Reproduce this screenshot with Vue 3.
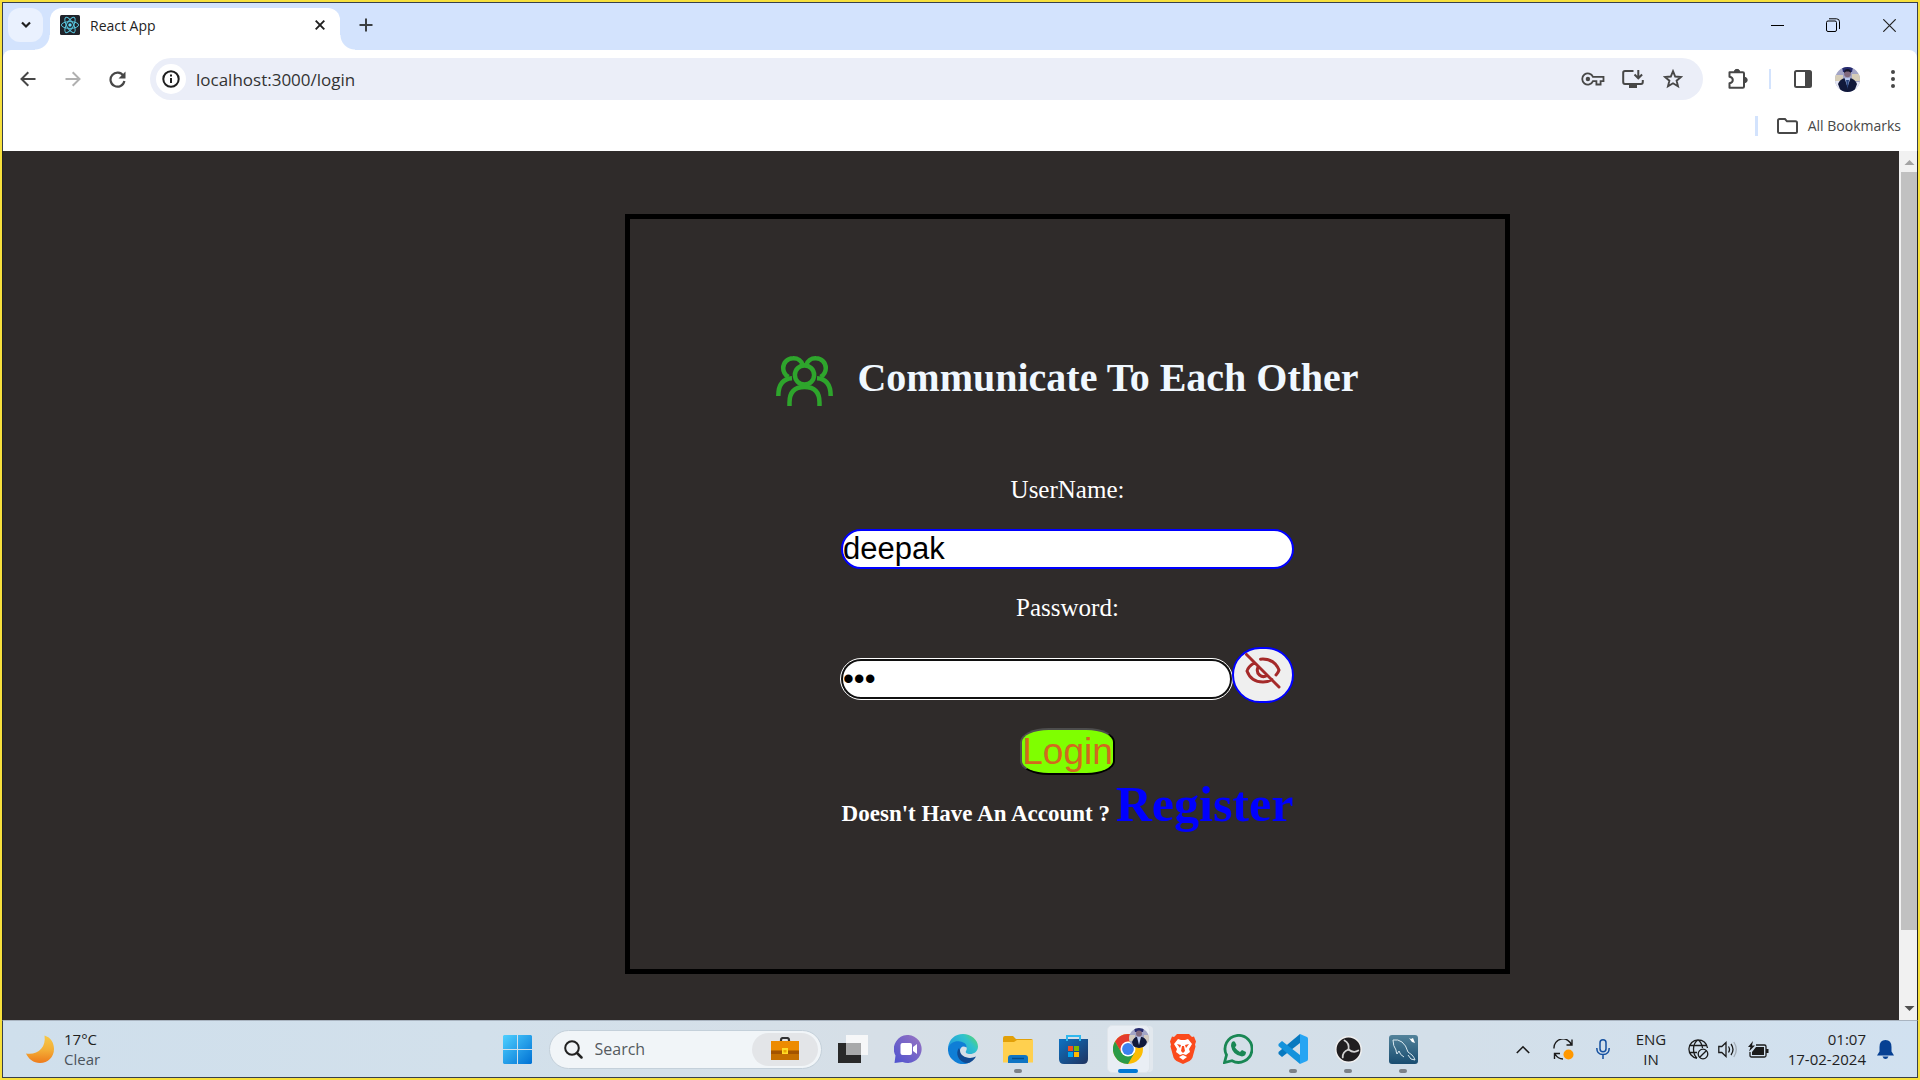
<script setup>
import { ref } from 'vue'

const username = ref('deepak')
const password = ref('abc')
const address = ref('localhost:3000/login')
</script>

<template>
  <div class="screen">
    <header class="tabstrip">
      <button class="tab-search" aria-label="Search tabs">
        <svg width="12" height="8" viewBox="0 0 12 8"><path d="M2 1.5 6 5.5 10 1.5" fill="none" stroke="#1f1f1f" stroke-width="2.2" /></svg>
      </button>
      <div class="tab">
        <svg width="20" height="20" viewBox="0 0 20 20">
          <rect width="20" height="20" rx="1.5" fill="#20232a" />
          <g fill="none" stroke="#58c4dc" stroke-width="1">
            <ellipse cx="10" cy="10" rx="8.6" ry="3.4" />
            <ellipse cx="10" cy="10" rx="8.6" ry="3.4" transform="rotate(60 10 10)" />
            <ellipse cx="10" cy="10" rx="8.6" ry="3.4" transform="rotate(120 10 10)" />
          </g>
          <circle cx="10" cy="10" r="1.7" fill="#61dafb" />
        </svg>
        <span class="tab-title">React App</span>
        <button class="tab-close" aria-label="Close tab">
          <svg width="10" height="10" viewBox="0 0 10 10"><path d="M.7.7 9.3 9.3M9.3.7.7 9.3" stroke="#1f1f1f" stroke-width="1.9" /></svg>
        </button>
      </div>
      <button class="new-tab" aria-label="New tab">
        <svg width="14" height="14" viewBox="0 0 14 14"><path d="M7 .5v13M.5 7h13" stroke="#3c4043" stroke-width="2" /></svg>
      </button>
      <div class="window-controls">
        <button aria-label="Minimize"><svg width="13" height="13" viewBox="0 0 13 13"><path d="M0 6.5h13" stroke="#000" /></svg></button>
        <button aria-label="Restore">
          <svg width="14" height="14" viewBox="0 0 14 14" fill="none" stroke="#000"><rect x=".5" y="3" width="10" height="10.5" rx="1.5" /><path d="M3 .8h7.5q3 0 3 3V11" /></svg>
        </button>
        <button aria-label="Close"><svg width="13" height="13" viewBox="0 0 13 13"><path d="M.3.3l12.4 12.4M12.7.3.3 12.7" stroke="#222" stroke-width="1.2" /></svg></button>
      </div>
    </header>

    <div class="chrome">
      <nav class="toolbar">
        <button class="tool" aria-label="Back">
          <svg width="16" height="16" viewBox="0 0 16 16" fill="none" stroke="#474747" stroke-width="2"><path d="M15.5 8H2M8.3 1.2 1.5 8l6.8 6.8" /></svg>
        </button>
        <button class="tool" aria-label="Forward">
          <svg width="16" height="16" viewBox="0 0 16 16" fill="none" stroke="#b0b0b0" stroke-width="2"><path d="M.5 8H14M7.7 1.2 14.5 8l-6.8 6.8" /></svg>
        </button>
        <button class="tool" aria-label="Reload">
          <svg width="17" height="17" viewBox="0 0 17 17"><path d="M14.4 4.8A7 7 0 1 0 15.4 10" fill="none" stroke="#474747" stroke-width="2.2" /><path d="M16.5.5v7h-7z" fill="#474747" /></svg>
        </button>
        <div class="omnibox">
          <button class="site-info" aria-label="Site information">
            <svg width="18" height="18" viewBox="0 0 18 18"><circle cx="9" cy="9" r="7.7" fill="none" stroke="#1f1f1f" stroke-width="2" /><path d="M9 8v5M9 4.6v2" stroke="#1f1f1f" stroke-width="2" /></svg>
          </button>
          <input v-model="address" class="address" aria-label="Address" />
          <button class="omni-icon" aria-label="Passwords">
            <svg width="24" height="14" viewBox="0 0 24 14" fill="none" stroke="#474747" stroke-width="1.8"><path d="M12 4.8A5.6 5.6 0 1 0 12 9.2h3.4v3.3h4.2V9.2h2.9V4.8z" /><circle cx="6.9" cy="7" r="2.2" fill="#474747" stroke="none" /></svg>
          </button>
          <button class="omni-icon" aria-label="Install app">
            <svg width="22" height="20" viewBox="0 0 22 20"><path d="M11.5 2H3Q1.2 2 1.2 3.800V13q0 2 1.800 2h16q1.800 0 1.800-2v-2" fill="none" stroke="#474747" stroke-width="2" /><path d="M7 15h8v4H7z" fill="#474747" /><path d="M16.300 1v8M12.500 5.500l3.800 3.800 3.800-3.800" fill="none" stroke="#474747" stroke-width="2" /></svg>
          </button>
          <button class="omni-icon" aria-label="Bookmark this page">
            <svg width="20" height="20" viewBox="0 0 20 20"><path d="M10 2.200 12.200 7.500 18 8 13.600 11.700 15 17.300 10 14.300 5 17.300 6.400 11.700 2 8 7.800 7.500z" fill="none" stroke="#474747" stroke-width="1.900" /></svg>
          </button>
        </div>
        <button class="tool" aria-label="Extensions">
          <svg width="22" height="22" viewBox="0 0 22 22"><path d="M2.500 4.200h13.300q1.200 0 1.200 1.200v13.200q0 1.200-1.200 1.200H2.500v-4.600q3.300-.6 3.300-3.200T2.500 8.800z" fill="none" stroke="#474747" stroke-width="2" stroke-linejoin="round" /><path d="M7.300 4a2.700 2.700 0 0 1 5.400 0M17.500 9.300a2.700 2.700 0 0 1 0 5.400" fill="#474747" stroke="#474747" /></svg>
        </button>
        <i class="divider"></i>
        <button class="tool" aria-label="Side panel">
          <svg width="18" height="18" viewBox="0 0 18 18"><rect x="1" y="1" width="16" height="16" rx="1.500" fill="none" stroke="#474747" stroke-width="2" /><path d="M11 1h6v16h-6z" fill="#474747" /></svg>
        </button>
        <button class="tool" aria-label="Profile">
          <svg width="25" height="25" viewBox="0 0 25 25">
            <clipPath id="profile-clip"><circle cx="12.500" cy="12.500" r="12.500" /></clipPath>
            <g clip-path="url(#profile-clip)">
              <path fill="#a3a5c6" d="M0 0h25v25H0z" /><path fill="#d6cdb8" d="M0 8h8v6H0zM17 7h8v7h-8z" /><path fill="#e6e8f6" d="M0 14h6v11H0zM20 15h5v10h-5z" />
              <path fill="#252a6e" d="M7 0h11l-1 5H8z" /><circle cx="12.500" cy="6.800" r="3.400" fill="#80697c" /><path d="M9 6q0-4 3.600-4T16 6l-2-1.500h-3z" fill="#15162b" />
              <path d="M3 17q2-5 7-6h5q5 1 7 6l-3 8H6z" fill="#10183a" /><path d="m9.500 11 3 9 3-9z" fill="#b6c7ef" /><path d="m11 13 1.500 9 1.500-9z" fill="#28447d" />
            </g>
          </svg>
        </button>
        <button class="tool" aria-label="Menu">
          <svg width="4" height="18" viewBox="0 0 4 18" fill="#474747"><circle cx="2" cy="2" r="2" /><circle cx="2" cy="9" r="2" /><circle cx="2" cy="16" r="2" /></svg>
        </button>
      </nav>
      <div class="bookmarks">
        <i class="divider wide"></i>
        <button class="all-bookmarks">
          <svg width="21" height="16" viewBox="0 0 21 16"><path d="M1 2.500Q1 1 2.500 1H8l2 2.300h8.500q1.500 0 1.500 1.500v8.700q0 1.500-1.500 1.500h-16Q1 15 1 13.500z" fill="none" stroke="#474747" stroke-width="2" /></svg>
          All Bookmarks
        </button>
      </div>
    </div>

    <div class="viewport">
      <main class="page">
        <section class="card">
          <div class="brand">
            <svg width="57" height="52" viewBox="0 0 57 52" fill="none" stroke="#2ea52c" stroke-width="4.500">
              <path d="M27 11.500A9.800 9.800 0 0 0 17 4.200 9.800 9.800 0 0 0 7.200 14q0 6 5.300 9M30 11.500A9.800 9.800 0 0 1 40 4.200 9.800 9.800 0 0 1 49.800 14q0 6-5.300 9" />
              <circle cx="28.500" cy="21" r="9.600" />
              <path d="M2.300 42Q2.300 25 16 24.300M54.700 42Q54.700 25 41 24.300M13.500 52V48.500Q13.500 33 28.500 33T43.500 48.500V52" />
            </svg>
            <h1>Communicate To Each Other</h1>
          </div>
          <form class="login" @submit.prevent>
            <label for="username">UserName:</label>
            <input id="username" v-model="username" class="field" type="text" />
            <label for="password">Password:</label>
            <div class="password-row">
              <input id="password" v-model="password" class="field active" type="password" />
              <button class="reveal" type="button" aria-label="Show password">
                <svg width="36" height="36" viewBox="0 0 36 36" fill="none" stroke="#a52a2a" stroke-width="3" stroke-linecap="round">
                  <path d="M1.500 1.500 34 34M9 10Q3 14 2 18q4 11 16 11 5 0 9-2.500M15.500 6.200Q29 5 34 17q-.7 2.500-3 5M13 14q-2 5 1.500 8t7.500.5" />
                </svg>
              </button>
            </div>
            <button class="submit" type="submit">Login</button>
          </form>
          <h3 class="signup">Doesn't Have An Account ? <a href="#register">Register</a></h3>
        </section>
      </main>
      <div class="scrollbar">
        <svg width="18" height="21" viewBox="0 0 18 21"><path d="m5.500 14 5-5 5 5z" fill="#a3a3a3" /></svg>
        <i class="thumb"></i>
        <i class="track"></i>
        <svg width="18" height="22" viewBox="0 0 18 22"><path d="m5.500 8 5 5 5-5z" fill="#505050" /></svg>
      </div>
    </div>

    <footer class="taskbar">
      <div class="weather">
        <svg width="28" height="28" viewBox="0 0 28 28">
          <defs><linearGradient id="moon" x2="0" y2="1"><stop stop-color="#f7c948" /><stop offset=".55" stop-color="#f3ac35" /><stop offset="1" stop-color="#ee7b1c" /></linearGradient></defs>
          <path d="M18.500.5C25 2.500 28 8 28 14c0 8-6 14-14 14C7.500 28 2.500 24 0 18.500 11 20.500 20.500 13 18.500.5z" fill="url(#moon)" />
        </svg>
        <p>17°C<br /><span>Clear</span></p>
      </div>

      <div class="dock">
        <button class="app" aria-label="Start">
          <svg width="29" height="29" viewBox="0 0 29 29">
            <defs><linearGradient id="start" x2="1" y2="1"><stop stop-color="#4fd0ff" /><stop offset="1" stop-color="#0071d4" /></linearGradient></defs>
            <path d="M1 0h13v14H0V1zM15 0h13l1 1v13H15zM0 15h14v14H1l-1-1zM15 15h14v13l-1 1H15z" fill="url(#start)" />
          </svg>
        </button>
        <div class="search">
          <svg width="19" height="19" viewBox="0 0 19 19" fill="none" stroke="#222" stroke-width="2"><circle cx="8" cy="8" r="6.800" /><path d="m13 13 4.500 4.500" stroke-width="2.500" stroke-linecap="round" /></svg>
          <input type="search" placeholder="Search" aria-label="Search" />
          <span class="case">
            <svg width="28" height="24" viewBox="0 0 28 24"><path d="M10 5V3q0-2 2-2h4q2 0 2 2v2" fill="none" stroke="#333" stroke-width="2.200" /><path d="M0 4h28v9H0z" fill="#ed8b00" /><path d="M0 13h28v10H0z" fill="#c46f00" /><path d="M0 14h28v3H0z" fill="#a35400" /><path d="M11 11h6v6h-6z" fill="#ffdc28" /><path d="M12.500 13h3v2.500h-3z" fill="#e9a900" /></svg>
          </span>
        </div>
        <button class="app" aria-label="Task view">
          <svg width="30" height="28" viewBox="0 0 30 28"><path d="M0 8h23v20H0z" fill="#292929" /><path d="M8 0h22v20H8z" fill="#fbfbfb" fill-opacity=".88" /><path d="M8 8h15v12H8z" fill="#a8a9aa" /></svg>
        </button>
        <button class="app" aria-label="Chat">
          <svg width="29" height="29" viewBox="0 0 29 29">
            <defs><linearGradient id="chat" x1="1" x2="0" y2="1"><stop stop-color="#9a75c2" /><stop offset="1" stop-color="#4d52cf" /></linearGradient></defs>
            <path d="M14.500 0a14 14 0 1 1-6 27L.5 28l1-7.500A14 14 0 0 1 14.500 0z" fill="url(#chat)" /><rect x="6.500" y="8" width="11.500" height="12" rx="2" fill="#fff" /><path d="m19 12 4-3v10l-4-3z" fill="#fff" />
          </svg>
        </button>
        <button class="app" aria-label="Edge">
          <svg width="30" height="30" viewBox="0 0 30 30">
            <defs><linearGradient id="edge" y1=".6"><stop stop-color="#219be0" /><stop offset=".6" stop-color="#30c2cc" /><stop offset="1" stop-color="#63dc55" /></linearGradient></defs>
            <path d="M0 14C1 5 7 0 15 0s15 6 15 12.500c0 5-4 7.500-8 7.500-3 0-5-1-4-3 2-3 0-6-4-7-6-1-11 0-14 4z" fill="url(#edge)" />
            <path d="M0 14C2 9 7 6.500 12 7.500c4 .5 7 3 6.500 6-5-3-8 2-6 7 2 4 6 7 10 7.500A15 15 0 0 1 0 14z" fill="#0f7ed6" />
            <path d="M11 14c-4 5-1 14 8 15.300 4-.8 7-3.300 9-6.800-7 3.500-16 0-16-6z" fill="#114a91" />
          </svg>
        </button>
        <button class="app running" aria-label="File Explorer">
          <svg width="30" height="27" viewBox="0 0 30 27"><path d="M0 2q0-2 2-2h8l3 3h15q2 0 2 2v6H0z" fill="#e2a008" /><path d="M0 6h11l3-2h16v22.500H0z" fill="#ffd04f" /><path d="M5 27v-5q0-3 3-3h14q3 0 3 3v5z" fill="#0f75c4" /><path d="M9 22.500h12" stroke="#054d8c" stroke-width="1.500" /></svg>
        </button>
        <button class="app" aria-label="Microsoft Store">
          <svg width="29" height="29" viewBox="0 0 29 29">
            <defs><linearGradient id="store" x2="1" y2="1"><stop stop-color="#0d72c3" /><stop offset="1" stop-color="#20335f" /></linearGradient></defs>
            <path d="M0 4h29v20q0 5-5 5H5q-5 0-5-5z" fill="url(#store)" /><path d="M8 6V1h13v5" fill="none" stroke="#30b8ee" stroke-width="2" /><path d="M9 11h5v5H9z" fill="#f25022" /><path d="M15 11h5v5h-5z" fill="#7fba00" /><path d="M9 17h5v5H9z" fill="#00a4ef" /><path d="M15 17h5v5h-5z" fill="#ffb900" />
          </svg>
        </button>
        <button class="app current" aria-label="Chrome">
          <svg class="chrome-logo" width="36" height="36" viewBox="0 0 36 36">
            <circle cx="15" cy="21" r="15" fill="#fbbc04" />
            <path d="M2 13.500A15 15 0 0 1 28 13.500H15L8.500 24.700z" fill="#e33b2e" />
            <path d="M2 13.500A15 15 0 0 0 15 36l6.500-11.300L8.500 24.700z" fill="#2a9b48" />
            <circle cx="15" cy="21" r="7.500" fill="#fff" /><circle cx="15" cy="21" r="5.900" fill="#3b82ee" />
            <clipPath id="badge-clip"><circle cx="26" cy="10" r="10" /></clipPath>
            <g clip-path="url(#badge-clip)"><path fill="#a3a5c6" d="M16 0h20v20H16z" /><path fill="#d3cbc0" d="M16 7h6v6h-6zM31 7h5v8h-5z" /><path fill="#252a6e" d="M21 0h10l-1 4h-8z" /><circle cx="26" cy="5.500" r="3" fill="#80697c" /><path d="M19 14q2-5 5-5h4q4 0 6 5l-3 6H21z" fill="#10183a" /><path d="m24 9 2 8 2-8z" fill="#b6c7ef" /></g>
          </svg>
        </button>
        <button class="app" aria-label="Brave">
          <svg width="26" height="30" viewBox="0 0 26 30"><path d="m7 0h12l3 3 2-.5 2 5-1 3 .5 2-3 11q-1 2-3 3.500L13 30l-6.500-3Q4.500 25.500 3.500 23.500L.5 12.500l.5-2-1-3 2-5 2 .5z" fill="#fb4a1c" /><path d="m8 5 3 1h4l3-1 4 5-3 5 1 3-4 3-3-1-3 1-4-3 1-3-3-5z" fill="#fff" /><path d="m7 10 4 1-1 3zM19 10l-4 1 1 3zM12 12h2l1 5-2 2-2-2z" fill="#fb4a1c" /><path d="m9 23 4-2 4 2-4 3z" fill="#fff" /></svg>
        </button>
        <button class="app" aria-label="WhatsApp">
          <svg width="30" height="30" viewBox="0 0 30 30"><path d="m1.500 28.500 2-7.500A13.500 13.500 0 1 1 9 26.700z" fill="none" stroke="#198754" stroke-width="2.800" /><path d="M9 8q2-1.500 3 0l1.500 3-1.500 2.500q2 3 5 4.500l2-2 4 2q0 4-4 4.500Q9.500 21 8 12 8 9.500 9 8z" fill="#198754" /></svg>
        </button>
        <button class="app running" aria-label="Visual Studio Code">
          <svg width="30" height="30" viewBox="0 0 30 30"><path d="M22 0v9L4 23l-3.500-3v-2z" fill="#0879bf" /><path d="M22 30v-9L4 7 .5 10v2z" fill="#1593dc" /><path d="m22 0 7 3q1 .5 1 2v20q0 1.500-1 2l-7 3z" fill="#27a5f3" /></svg>
        </button>
        <button class="app running" aria-label="OBS Studio">
          <svg width="27" height="27" viewBox="0 0 27 27"><circle cx="13.500" cy="13.500" r="12.700" fill="#201e20" stroke="#f1f1f1" stroke-width="1.500" /><g fill="none" stroke="#d2d2d2" stroke-width="1.800" stroke-linecap="round"><path d="M13.500 13.500Q14.500 7 9.500 4.500" /><path d="M13.500 13.500Q14.500 7 9.500 4.500" transform="rotate(120 13.500 13.500)" /><path d="M13.500 13.500Q14.500 7 9.500 4.500" transform="rotate(240 13.500 13.500)" /></g></svg>
        </button>
        <button class="app running" aria-label="MySQL Workbench">
          <svg width="29" height="29" viewBox="0 0 29 29">
            <defs><linearGradient id="sql" x2="0" y2="1"><stop stop-color="#53839b" /><stop offset="1" stop-color="#194d70" /></linearGradient></defs>
            <rect width="29" height="29" rx="3" fill="url(#sql)" /><path d="M4 5q5-1 9 2t6 10l4 3q2 2 3 5l-4-1-3-4M8 19q-1-2-1-4-3-4-3-10M8 19l2-3q1 4 5 6" fill="none" stroke="#d9e8ef" stroke-width="1" /><path d="m20 3 2 1 2-1 2 5-3-1z" fill="#fff" />
          </svg>
        </button>
      </div>

      <div class="tray">
        <button class="tray-icon" aria-label="Hidden icons"><svg width="14" height="9" viewBox="0 0 14 9"><path d="m.8 8 6.200-6.200L13.200 8" fill="none" stroke="#1b1b1b" stroke-width="1.600" /></svg></button>
        <button class="tray-icon" aria-label="Updates">
          <svg width="21" height="21" viewBox="0 0 21 21"><path d="M1 9.500A9 9 0 0 1 18.500 6M19 .5V6h-5.500M10 20q-5 0-8-5M1.500 20v-5.500H7" fill="none" stroke="#1b1b1b" stroke-width="1.400" /><circle cx="15.500" cy="15.500" r="5" fill="#ff9800" /></svg>
        </button>
        <button class="tray-icon" aria-label="Microphone">
          <svg width="14" height="20" viewBox="0 0 14 20" fill="none" stroke="#1450a0" stroke-width="1.500"><rect x="4" y=".8" width="6" height="12" rx="3" /><path d="M.8 9q0 6.500 6.200 6.500T13.200 9M7 15.500V20" /></svg>
        </button>
        <p class="lang">ENG<br />IN</p>
        <button class="tray-icon small" aria-label="Network">
          <svg width="21" height="21" viewBox="0 0 21 21" fill="none" stroke="#1b1b1b" stroke-width="1.300"><path d="M19.500 9A9.300 9.300 0 1 0 9 19.300M1.500 6.500h17M1.500 13.500H9M9 19Q5.500 16 5.500 10T10 .8Q14 4 14.500 9" /><circle cx="15" cy="15" r="4.800" /><path d="m11.700 18.300 6.600-6.600" /></svg>
        </button>
        <button class="tray-icon small" aria-label="Volume">
          <svg width="20" height="17" viewBox="0 0 20 17" fill="none" stroke="#1b1b1b" stroke-width="1.300"><path d="M.8 5.500h3L8 1.500v14l-4.200-4h-3zM10.500 5.500q2 3 0 6M13 3q4 5.500 0 11" /><path d="M15.800 1q5 7.500 0 15" stroke="#a4adb6" /></svg>
        </button>
        <button class="tray-icon small" aria-label="Battery">
          <svg width="21" height="17" viewBox="0 0 21 17"><path d="M8 4h8.500q1.500 0 1.500 1.500v9q0 1.500-1.500 1.500h-13Q2 16 2 14.500V11" fill="none" stroke="#1b1b1b" stroke-width="1.300" /><path d="M8 6h8v8H4v-3zM18 8h2.500v4H18zM5 0 0 6h2.500L1 10.500 7 4.500H4z" fill="#1b1b1b" /></svg>
        </button>
        <p class="clock">01:07<br />17-02-2024</p>
        <button class="bell" aria-label="Notifications">
          <svg width="17" height="19" viewBox="0 0 17 19" fill="#064093"><path d="M8.500 0Q14.500 0 14.500 7v4.500l2.500 4H0l2.500-4V7Q2.500 0 8.500 0zM5.500 16.500h6q-1 2.500-3 2.500t-3-2.500z" /></svg>
        </button>
      </div>
    </footer>
  </div>
</template>

<style>
body {
  margin: 0;
}
</style>

<style scoped>
.screen {
  box-sizing: border-box;
  min-height: 100vh;
  display: flex;
  flex-direction: column;
  border: 2px solid #f7e03c;
  font-family: "Open Sans", "Noto Sans", sans-serif;
  font-size: 14px;
  color: #1f1f1f;
}
.screen * {
  box-sizing: border-box;
}
.screen svg {
  display: block;
  flex: none;
}
button {
  padding: 0;
  border: 0;
  background: none;
  font: inherit;
  color: inherit;
}
input {
  padding: 0;
  border: 0;
  min-width: 0;
  font: inherit;
  color: inherit;
}
p,
h1,
h3 {
  margin: 0;
}

/* Tab strip */
.tabstrip {
  display: flex;
  align-items: flex-start;
  height: 48px;
  padding: 5px 0 0 5px;
  border: 1px solid #38404a;
  border-bottom: 0;
  background: #d3e3fd;
}
.tab-search {
  display: grid;
  place-items: center;
  width: 35px;
  height: 34px;
  border-radius: 12px;
  background: #eaf1fe;
}
.tab {
  position: relative;
  display: flex;
  align-items: center;
  width: 290px;
  height: 42px;
  margin-left: 7px;
  padding: 0 10px 8px;
  border-radius: 12px 12px 0 0;
  background: #fff;
}
.tab::before,
.tab::after {
  content: "";
  position: absolute;
  bottom: 0;
  width: 15px;
  height: 15px;
}
.tab::before {
  right: 100%;
  background: radial-gradient(circle at 0 0, transparent 14px, #fff 15px);
}
.tab::after {
  left: 100%;
  background: radial-gradient(circle at 100% 0, transparent 14px, #fff 15px);
}
.tab-title {
  flex: 1;
  margin-left: 10px;
}
.tab-close {
  display: grid;
  place-items: center;
  width: 20px;
  height: 20px;
}
.new-tab {
  display: grid;
  place-items: center;
  width: 34px;
  height: 34px;
  margin-left: 9px;
}
.window-controls {
  display: flex;
  margin-left: auto;
}
.window-controls button {
  display: grid;
  place-items: center;
  width: 56px;
  height: 34px;
}

/* Toolbar */
.chrome {
  border: 1px solid #38404a;
  border-width: 0 1px;
  background: linear-gradient(#d3e3fd 12px, #fff 12px);
}
.toolbar {
  display: flex;
  align-items: center;
  padding: 8px 2px 0;
  border-radius: 8px 8px 0 0;
  background: #fff;
}
.tool {
  display: grid;
  place-items: center;
  flex: none;
  width: 45px;
  height: 42px;
}
.omnibox {
  flex: 1;
  display: flex;
  align-items: center;
  height: 42px;
  margin: 0 12px 0 10px;
  padding: 0 10px 0 6px;
  border-radius: 21px;
  background: #ebeef8;
}
.site-info {
  display: grid;
  place-items: center;
  width: 30px;
  height: 30px;
  border-radius: 50%;
  background: #fff;
}
.address {
  flex: 1;
  margin-left: 10px;
  background: none;
  outline: 0;
  font-size: 17px;
  color: #333;
}
.omni-icon {
  display: grid;
  place-items: center;
  width: 40px;
  height: 40px;
}
.divider {
  flex: none;
  width: 2px;
  height: 20px;
  margin: 0 9px;
  background: #d3e3fd;
}
.divider.wide {
  width: 3px;
  margin: 0 19px 0 0;
}
.bookmarks {
  display: flex;
  align-items: center;
  justify-content: flex-end;
  height: 51px;
  padding-right: 16px;
  background: #fff;
}
.all-bookmarks {
  display: flex;
  align-items: center;
  gap: 10px;
  color: #474747;
}

/* Page */
.viewport {
  flex: 1;
  display: flex;
  border: 1px solid #222;
  border-width: 0 1px;
}
.page {
  flex: 1;
  display: grid;
  grid-template-columns: 622fr 885fr 389fr;
  align-items: start;
  padding: 63px 0 46px;
  background: #2f2b2a;
  font-family: "Liberation Serif", "Times New Roman", serif;
}
.card {
  grid-column: 2;
  display: flex;
  flex-direction: column;
  align-items: center;
  padding: 135px 0 137px;
  border: 5px solid #000;
  color: #fff;
}
.brand {
  display: flex;
  gap: 24px;
  height: 52px;
}
.brand h1 {
  font-size: 40px;
  line-height: 48px;
  color: #f0f8ff;
  white-space: nowrap;
}
.login {
  display: flex;
  flex-direction: column;
  align-items: center;
  gap: 25px;
  width: 453px;
  margin-top: 70px;
}
.login label {
  font-size: 25px;
  line-height: 28px;
}
.field {
  width: 100%;
  height: 40px;
  border: 2px solid #00f;
  border-radius: 20px;
  background: #fff;
  font-family: "Liberation Sans", Arial, sans-serif;
  font-size: 31px;
  color: #000;
}
.password-row {
  display: flex;
  align-items: flex-end;
  width: 100%;
}
.field.active {
  flex: 1;
  margin-bottom: 4px;
  border-color: #101010;
  outline: 1px solid #fff;
}
.reveal {
  display: flex;
  justify-content: center;
  align-items: flex-start;
  width: 62px;
  height: 56px;
  padding-top: 4px;
  border: 2px solid #00f;
  border-radius: 28px;
  background: #efefef;
}
.submit {
  width: 95px;
  height: 47px;
  border: 2px solid;
  border-color: #4d4d4d #000 #000 #4d4d4d;
  border-radius: 30%;
  background: #7fff00;
  font-family: "Liberation Sans", Arial, sans-serif;
  font-size: 37px;
  line-height: 42px;
  color: #d2691e;
}
.signup {
  margin-top: 1px;
  font-size: 23px;
  line-height: 28px;
  white-space: nowrap;
}
.signup a {
  font-size: 50px;
  line-height: 56px;
  color: #00f;
  text-decoration: none;
}

/* Page scrollbar */
.scrollbar {
  display: flex;
  flex-direction: column;
  width: 18px;
  background: #f1f1f1;
}
.thumb {
  flex: 758;
  margin-left: 2px;
  background: #c1c1c1;
}
.track {
  flex: 68;
}

/* Taskbar */
.taskbar {
  display: grid;
  grid-template-columns: 1fr auto 1fr;
  align-items: center;
  height: 58px;
  border: 1px solid #38404a;
  border-top-color: #a9b4c0;
  background: linear-gradient(90deg, #cfdfec, #d2e0eb 25%, #d6dfe7 45%, #d3dfe9 75%, #d1e1f0);
}
.weather {
  display: flex;
  align-items: center;
  gap: 10px;
  padding-left: 23px;
  font-size: 15px;
  line-height: 20px;
}
.weather span {
  color: #4b545c;
}
.dock {
  display: flex;
  align-items: center;
}
.app {
  position: relative;
  display: grid;
  place-items: center;
  width: 55px;
  height: 48px;
}
.running::after,
.current::after {
  content: "";
  position: absolute;
  left: 50%;
  bottom: 0;
  width: 8px;
  height: 4px;
  margin-left: -4px;
  border-radius: 2px;
  background: #7c8288;
}
.current::before {
  content: "";
  position: absolute;
  inset: 0 6px;
  border: 1px solid #dfe5eb;
  border-radius: 5px;
  background: #e9eef4;
  box-shadow: 4px 0 0 -1px #e2e8ee;
}
.current::after {
  width: 20px;
  margin-left: -10px;
  background: #0078d4;
}
.chrome-logo {
  position: relative;
  margin: 0 0 6px 6px;
}
.search {
  display: flex;
  align-items: center;
  width: 273px;
  height: 39px;
  margin: 0 4px;
  padding: 0 3px 0 14px;
  border: 1px solid #c4d0da;
  border-radius: 20px;
  background: #f1f5f8;
}
.search input {
  flex: 1;
  margin-left: 12px;
  background: none;
  outline: 0;
  font-size: 16px;
}
.search input::placeholder {
  color: #555a5f;
}
.case {
  display: grid;
  place-items: center;
  width: 66px;
  height: 33px;
  border-radius: 17px;
  background: #e3e5e8;
}
.tray {
  display: flex;
  align-items: center;
  justify-content: flex-end;
  padding-right: 13px;
  font-size: 15px;
  line-height: 20px;
}
.tray-icon {
  display: grid;
  place-items: center;
  width: 40px;
  height: 40px;
}
.tray-icon.small {
  width: 30px;
}
.lang {
  width: 56px;
  margin-right: 4px;
  text-align: center;
}
.clock {
  width: 93px;
  text-align: right;
}
.bell {
  display: grid;
  place-items: center;
  width: 38px;
  height: 40px;
}
</style>
